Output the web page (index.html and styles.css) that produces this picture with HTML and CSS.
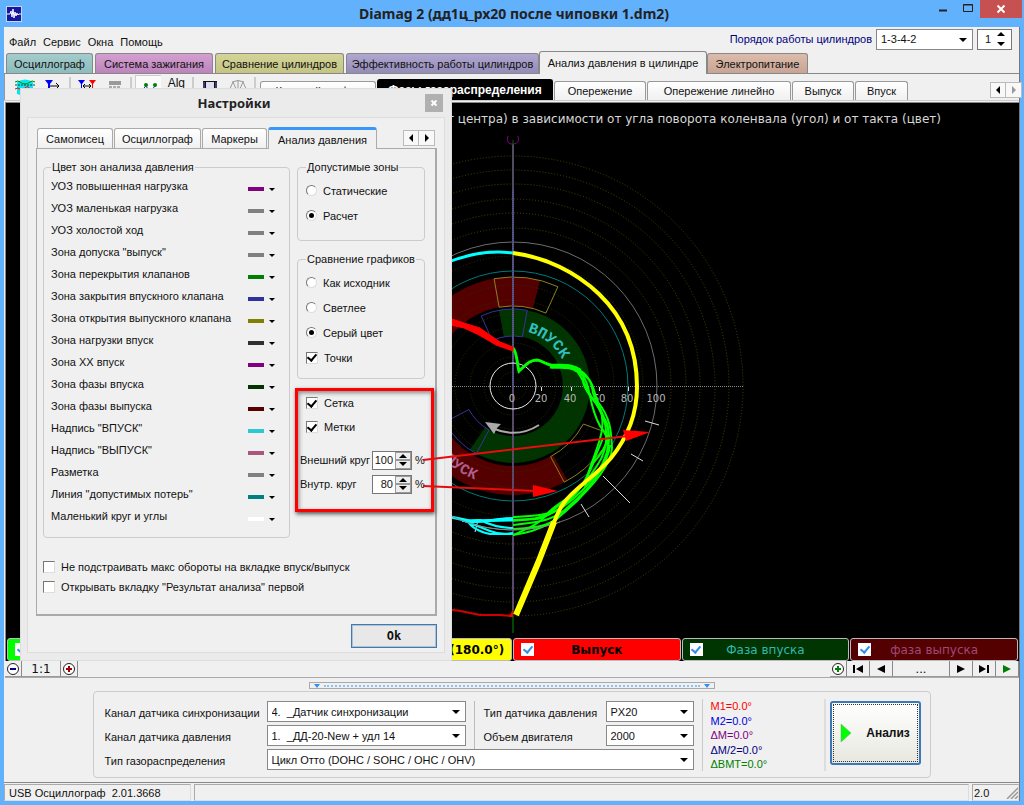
FILE: index.html
```html
<!DOCTYPE html>
<html lang="ru">
<head>
<meta charset="utf-8">
<title>Diamag 2</title>
<link rel="stylesheet" href="styles.css">
</head>
<body>
<div class="window">
  <header class="titlebar">
    <svg class="app-icon" width="16" height="16" viewBox="0 0 16 16"><rect width="16" height="16" fill="#c8d4f0"/><rect x="1" y="1" width="14" height="14" fill="#1418a0"/><path d="M1 8h3l1-3 1 6 1-8 1 9 1-6 1 4 1-3 1 2 1-1h2" fill="none" stroke="#fff"/></svg>
    <h1 class="title">Diamag 2 (дд1ц_px20 после чиповки 1.dm2)</h1>
    <div class="win-buttons">
      <button class="win-btn" aria-label="Свернуть"><svg width="10" height="12" viewBox="0 0 10 12"><path d="M1 8.500h8" stroke="#222" stroke-width="2"/></svg></button>
      <button class="win-btn" aria-label="Развернуть"><svg width="12" height="12" viewBox="0 0 12 12"><path d="M1.500 2.500h9v7h-9zM1 3h10" fill="none" stroke="#222"/></svg></button>
      <button class="win-btn win-close" aria-label="Закрыть"><svg width="10" height="10" viewBox="0 0 10 10"><path d="M1.500 1.500l7 7M8.500 1.500l-7 7" stroke="#fff" stroke-width="2"/></svg></button>
    </div>
  </header>

  <div class="client">
    <div class="menu-row">
      <nav class="menu">
        <button>Файл</button><button>Сервис</button><button>Окна</button><button>Помощь</button>
      </nav>
      <div class="order">
        <label for="order">Порядок работы цилиндров</label>
        <span class="combo combo-order"><select id="order"><option>1-3-4-2</option></select></span>
        <span class="spin spin-top"><input type="text" value="1" aria-label="Номер цилиндра"><span class="spin-arrows"><button class="up" aria-label="Больше"></button><button class="down" aria-label="Меньше"></button></span></span>
      </div>
    </div>

    <div class="main-tabs" role="tablist">
      <button role="tab" class="mtab teal">Осциллограф</button>
      <button role="tab" class="mtab pink">Система зажигания</button>
      <button role="tab" class="mtab olive">Сравнение цилиндров</button>
      <button role="tab" class="mtab violet">Эффективность работы цилиндров</button>
      <button role="tab" class="mtab current" aria-selected="true">Анализ давления в цилиндре</button>
      <button role="tab" class="mtab tan">Электропитание</button>
    </div>

    <div class="toolbar">
      <div class="tools">
        <button aria-label="Сигнал"><svg width="20" height="18" viewBox="0 0 20 18"><path d="M2 3q8-5 16 0v12q-8 3-16 0z" fill="#00e8f0"/><path d="M0 3q3-2 5 0 5 4 10 0 2-2 5 0" fill="none" stroke="#008000"/><path d="M0 6h20" stroke="#333" stroke-dasharray="2 1"/><path d="M0 10q3-2 5 0t5-1 5 1 5 0" fill="none" stroke="red"/></svg></button>
        <button aria-label="Маркер"><svg width="16" height="18" viewBox="0 0 16 18"><path d="M0 1h8L5 5v8H3V5z" fill="#00f"/><path d="M5 7h9M11 4l3 3-3 3" fill="none" stroke="#000"/></svg></button>
        <i class="sep"></i>
        <button aria-label="Маркеры"><svg width="18" height="18" viewBox="0 0 18 18"><path d="M0 1h7L4 5v9H3V5z" fill="#00f"/><path d="M11 1h7l-3 4v9h-1V5z" fill="red"/><path d="M5 7h8M7 5L5 7l2 2M11 5l2 2-2 2" fill="none" stroke="#000"/></svg></button>
        <button aria-label="Калькулятор"><svg width="16" height="18" viewBox="0 0 16 18"><path d="M2 2h12v4H2z" fill="#999"/><path d="M2 8h12M2 11h12M2 14h12" stroke="#aaa" stroke-width="2" stroke-dasharray="3 1"/></svg></button>
        <i class="sep"></i>
        <button class="pressed" aria-label="Точки"><svg width="18" height="18" viewBox="0 0 18 18"><path d="M1 11l5-5 4 6 5-6" fill="none" stroke="#22f"/><circle cx="6" cy="5" r="2" fill="#008000"/><circle cx="15" cy="5" r="2" fill="#008000"/></svg></button>
        <button class="alg">Alg</button>
        <i class="sep"></i>
        <button aria-label="Сохранить"><svg width="16" height="18" viewBox="0 0 16 18"><path d="M1 2h14v13H1z" fill="#111"/><path d="M4 3h8v6H4z" fill="#dde"/><path d="M2 3v7M14 3v7" stroke="#66d"/></svg></button>
        <button aria-label="Весы"><svg width="20" height="18" viewBox="0 0 20 18"><path d="M1 12L5 3l4 9zM11 12l4-9 4 9zM10 1v12M4 3q6-3 12 0" fill="none" stroke="#999"/></svg></button>
        <i class="sep"></i>
      </div>
      <div class="sub-tabs" role="tablist">
        <button role="tab" class="stab s1">Круговой график</button>
        <button role="tab" class="stab s2 current" aria-selected="true">Фазы газораспределения</button>
        <button role="tab" class="stab s3">Опережение</button>
        <button role="tab" class="stab s4">Опережение линейно</button>
        <button role="tab" class="stab s5">Выпуск</button>
        <button role="tab" class="stab s6">Впуск</button>
      </div>
      <div class="scroller"><button aria-label="Назад"><i class="tri-l"></i></button><button aria-label="Вперёд"><i class="tri-r dim"></i></button></div>
    </div>

    <main class="canvas">
      <p class="caption">Давление (расстояние от центра) в зависимости от угла поворота коленвала (угол) и от такта (цвет)</p>
      <svg class="plot" viewBox="6 130 1013 508" preserveAspectRatio="xMinYMin meet">
        <defs>
          <path id="arcIn" d="M513 330A56 56 0 0 1 569 386"/>
          <path id="arcOut" d="M412 386A101 101 0 0 0 513 487"/>
        </defs>
        <!-- phase zones -->
        <path fill="#540000" d="M540.100 280.400A109 109 0 1 0 567.500 480.400L553 455.300A80 80 0 1 1 532.900 308.500Z"/>
        <path fill="#003400" d="M499 310.300A77 77 0 1 1 469.900 449.800L485 427.500A50 50 0 1 0 503.900 336.800Z"/>
        <g fill="none" stroke="#303004" stroke-dasharray="1 2">
          <circle cx="513" cy="386" r="14"/><circle cx="513" cy="386" r="29"/><circle cx="513" cy="386" r="43"/><circle cx="513" cy="386" r="58"/><circle cx="513" cy="386" r="72"/><circle cx="513" cy="386" r="86"/><circle cx="513" cy="386" r="101"/><circle cx="513" cy="386" r="130"/>
        </g>
        <g fill="none" stroke="#46460a" stroke-dasharray="1 2">
          <circle cx="513" cy="386" r="158"/><circle cx="513" cy="386" r="173"/><circle cx="513" cy="386" r="187"/><circle cx="513" cy="386" r="202"/><circle cx="513" cy="386" r="216"/><circle cx="513" cy="386" r="230"/>
        </g>
        <circle cx="513" cy="386" r="115" fill="none" stroke="#007878"/>
        <circle cx="513" cy="386" r="144" fill="none" stroke="#6c6c6c"/>
        <!-- valve tolerance sectors -->
        <g fill="none" stroke="#8c8020">
          <path d="M494.100 278.700A109 109 0 0 1 557.900 286.700L545.900 313.100A80 80 0 0 0 499.100 307.200Z"/>
          <path d="M608 433L583.400 424A80 80 0 0 1 550.600 456.600L564.200 482.200A109 109 0 0 0 602 450"/>
        </g>
        <g fill="none" stroke="#34349c">
          <path d="M481.200 315.900A77 77 0 0 1 527.300 310.300L522.300 336.900A50 50 0 0 0 492.300 340.500Z"/>
          <path d="M468.900 409.500A50 50 0 0 0 489.100 429.900L476.300 453.700A77 77 0 0 1 445 422.100Z"/>
        </g>
        <!-- axes -->
        <path d="M450 386.500H744" stroke="#888" stroke-dasharray="1 1"/>
        <path d="M513 144V630" stroke="#504c60" stroke-width="2"/>
        <path d="M513 190V386" stroke="#5454a0" stroke-width="2" stroke-dasharray="1 1"/>
        <path d="M513 386V610" stroke="#704080" stroke-dasharray="2 2"/>
        <path d="M513 610V633" stroke="#004800" stroke-width="2"/>
        <path d="M508 136q-2 7 3 8h3q6-1 4-8" fill="none" stroke="#800080"/>
        <path d="M513 140v5" stroke="#006000"/>
        <circle cx="513" cy="386" r="23" fill="none" stroke="#eee"/>
        <path d="M541.500 387v4M571.500 387v4M599.500 387v4M628.500 387v4" stroke="#ddd"/>
        <g class="scale"><text x="512" y="402">0</text><text x="541" y="402">20</text><text x="570" y="402">40</text><text x="599" y="402">60</text><text x="627" y="402">80</text><text x="656" y="402">100</text></g>
        <path d="M539 425Q517 439 492 428" fill="none" stroke="#aaa" stroke-width="2"/>
        <path d="M485 422l16 2-4 4-3 6z" fill="#aaa"/>
        <text class="zone zone-in"><textPath href="#arcIn" startOffset="15">ВПУСК</textPath></text>
        <text class="zone zone-out"><textPath href="#arcOut" startOffset="119" text-anchor="end">ВЫПУСК</textPath></text>
        <path d="M645 421l14 4M631 454l12 7M603 476l27 27M581 504l8 13M478 520l-3 12" stroke="#ddd"/>
        <!-- pressure traces -->
        <g fill="none" stroke="#0f0" stroke-width="2">
          <path stroke-width="3" d="M513 348C517 352 517 364 519 371C525 366 529 360 537 360C544 361 547 366 556 366C568 365 576 368 582 373"/>
          <path stroke-width="5" d="M550 366C560 367 570 364 580 371"/>
          <path d="M574 368C590 373 592 386 593 393C597 405 608 420 609 435C611 460 590 487 563 507C550 516 530 516 513 517"/>
          <path d="M576 370C584 379 588 394 595 402C606 420 607 429 606 443C603 467 578 491 553 510C542 520 528 519 513 521"/>
          <path d="M578 371C593 383 586 400 600 426C618 446 602 478 570 505C553 523 533 522 513 525"/>
          <path d="M574 370C596 378 592 390 598 402C612 420 611 434 612 448C611 470 582 497 561 515C549 528 530 528 513 529"/>
          <path d="M584 376C579 385 594 401 600 408C608 430 595 450 587 477C579 495 556 503 547 514C539 525 524 530 513 535"/>
          <path d="M604 418C613 430 607 448 594 462C586 479 580 492 566 503C559 510 553 513 546 516C535 522 525 518 513 520"/>
          <path d="M603 438C595 459 587 472 585 488M610 445C608 465 588 489 577 501C562 514 550 530 513 535"/>
        </g>
        <g fill="none" stroke="#0ff" stroke-width="2">
          <path stroke-width="3" d="M446 263C468 254 490 250 513 253"/>
          <path stroke-width="3" d="M446 516L470 521L513 520"/>
          <path d="M470 522C485 523 495 518 513 518M462 520Q480 527 490 531T513 533M462 521L480 520Q496 528 513 528M468 521Q472 530 490 534H513"/>
        </g>
        <path d="M369 386A144 144 0 0 0 560 522" fill="none" stroke="#888"/>
        <path d="M446 317L464 323 480 328 500 342 513 347V351L496 345 479 335 464 328 446 324Z" fill="red" stroke="red"/>
        <path d="M446 609L460 611 480 615H500L513 616" fill="none" stroke="#d00000" stroke-width="2"/>
        <path d="M513 609l-4 8h4z" fill="red"/>
        <path d="M513 253C545 257 576 272 599 294C625 319 637 352 637 387C637 413 628 437 611 458C594 478 574 488 563 504C558 511 555 520 551 530" fill="none" stroke="#ff0" stroke-width="4"/>
        <path d="M554 522L538 563L516 615" fill="none" stroke="#ff0" stroke-width="6"/>
      </svg>
      <div class="legend">
        <label class="chip green"><input type="checkbox" checked><span>Сжатие</span></label>
        <label class="chip cyan"><input type="checkbox" checked><span>Сжатие (180.0°)</span></label>
        <label class="chip yellow"><input type="checkbox" checked><span>Рабочий такт (180.0°)</span></label>
        <label class="chip red"><input type="checkbox" checked><span>Выпуск</span></label>
        <label class="chip dgreen"><input type="checkbox" checked><span>Фаза впуска</span></label>
        <label class="chip dred"><input type="checkbox" checked><span>фаза выпуска</span></label>
      </div>
    </main>

    <div class="zoombar">
      <div class="zgroup">
        <button class="zb" aria-label="Уменьшить"><svg width="14" height="14" viewBox="0 0 14 14"><circle cx="7" cy="7" r="5.500" fill="#fff" stroke="#222"/><path d="M4 7h6" stroke="#00008b" stroke-width="2"/></svg></button>
        <button class="zb ratio">1:1</button>
        <button class="zb" aria-label="Увеличить"><svg width="14" height="14" viewBox="0 0 14 14"><circle cx="7" cy="7" r="5.500" fill="#fff" stroke="#222"/><path d="M4 7h6M7 4v6" stroke="#a00000" stroke-width="2"/></svg></button>
      </div>
      <div class="zgroup">
        <button class="zb" aria-label="Добавить"><svg width="14" height="14" viewBox="0 0 14 14"><circle cx="7" cy="7" r="5.500" fill="#fff" stroke="#222"/><path d="M4 7h6M7 4v6" stroke="#008000" stroke-width="2"/></svg></button>
        <button class="zb nav" aria-label="В начало"><svg width="12" height="10" viewBox="0 0 12 10"><path d="M1 1h2v8H1zM11 1v8L4 5z"/></svg></button>
        <button class="zb nav" aria-label="Назад"><svg width="12" height="10" viewBox="0 0 12 10"><path d="M10 1v8L2 5z"/></svg></button>
        <button class="zb dots">...</button>
        <button class="zb nav" aria-label="Вперёд"><svg width="12" height="10" viewBox="0 0 12 10"><path d="M2 1v8l8-4z"/></svg></button>
        <button class="zb nav" aria-label="В конец"><svg width="12" height="10" viewBox="0 0 12 10"><path d="M9 1h2v8H9zM1 1v8l7-4z"/></svg></button>
        <button class="zb nav" aria-label="Пуск"><svg width="12" height="10" viewBox="0 0 12 10"><path d="M2 1v8l8-4z" fill="#008000"/></svg></button>
      </div>
    </div>

    <section class="bottom">
      <div class="splitter"><i class="tri-d"></i><span class="dotline"></span><i class="tri-d"></i></div>
      <div class="params">
        <div class="fields">
          <label for="sync">Канал датчика синхронизации</label>
          <span class="combo"><select id="sync"><option>4.&nbsp; _Датчик синхронизации</option></select></span>
          <label class="second" for="sensor">Тип датчика давления</label>
          <span class="combo"><select id="sensor"><option>PX20</option></select></span>
          <label for="press">Канал датчика давления</label>
          <span class="combo"><select id="press"><option>1.&nbsp; _ДД-20-New + удл 14</option></select></span>
          <label class="second" for="volume">Объем двигателя</label>
          <span class="combo"><select id="volume"><option>2000</option></select></span>
          <label for="gas">Тип газораспределения</label>
          <span class="combo wide"><select id="gas"><option>Цикл Отто (DOHC / SOHC / OHC / OHV)</option></select></span>
          <i class="rule"></i>
        </div>
        <div class="readout">
          <span class="c-red">M1=0.0°</span><span class="c-blue">M2=0.0°</span><span class="c-purple">ΔM=0.0°</span><span class="c-navy">ΔM/2=0.0°</span><span class="c-green">ΔBMT=0.0°</span>
        </div>
        <div class="run">
          <button class="analyze"><svg width="12" height="20" viewBox="0 0 12 20"><path d="M1 1l10 9-10 9z" fill="#0f0" stroke="#6a6" stroke-width=".5"/></svg><span>Анализ</span></button>
        </div>
      </div>
    </section>

    <footer class="status">
      <span class="cell device">USB Осциллограф&nbsp; 2.01.3668</span>
      <span class="cell grow"></span>
      <span class="cell ver">2.0<svg width="12" height="12" viewBox="0 0 12 12"><path d="M1 12L12 1M5 12l7-7M9 12l3-3" stroke="#999" stroke-width="1.500"/></svg></span>
    </footer>
  </div>

  <section class="dialog" role="dialog" aria-labelledby="dlg">
    <header class="dlg-head"><h2 id="dlg">Настройки</h2><button class="dlg-close" aria-label="Закрыть"><svg width="8" height="8" viewBox="0 0 8 8"><path d="M1.500 1.500l5 5M6.500 1.500l-5 5" stroke="#fff" stroke-width="2"/></svg></button></header>
    <div class="dlg-body">
      <div class="dlg-tabs" role="tablist">
        <button role="tab" class="dtab d1">Самописец</button>
        <button role="tab" class="dtab d2">Осциллограф</button>
        <button role="tab" class="dtab d3">Маркеры</button>
        <button role="tab" class="dtab d4 current" aria-selected="true">Анализ давления</button>
        <div class="scroller"><button aria-label="Назад"><i class="tri-l"></i></button><button aria-label="Вперёд"><i class="tri-r"></i></button></div>
      </div>
      <div class="dlg-panel">
        <div class="cols">
          <fieldset class="colors">
            <legend>Цвет зон анализа давления</legend>
            <div class="crow"><span>УОЗ повышенная нагрузка</span><button class="pick purple" aria-label="Цвет"></button></div>
            <div class="crow"><span>УОЗ маленькая нагрузка</span><button class="pick gray" aria-label="Цвет"></button></div>
            <div class="crow"><span>УОЗ холостой ход</span><button class="pick gray" aria-label="Цвет"></button></div>
            <div class="crow"><span>Зона допуска "выпуск"</span><button class="pick gray" aria-label="Цвет"></button></div>
            <div class="crow"><span>Зона перекрытия клапанов</span><button class="pick pgreen" aria-label="Цвет"></button></div>
            <div class="crow"><span>Зона закрытия впускного клапана</span><button class="pick pblue" aria-label="Цвет"></button></div>
            <div class="crow"><span>Зона открытия выпускного клапана</span><button class="pick polive" aria-label="Цвет"></button></div>
            <div class="crow"><span>Зона нагрузки впуск</span><button class="pick pdark" aria-label="Цвет"></button></div>
            <div class="crow"><span>Зона ХХ впуск</span><button class="pick purple" aria-label="Цвет"></button></div>
            <div class="crow"><span>Зона фазы впуска</span><button class="pick pdgreen" aria-label="Цвет"></button></div>
            <div class="crow"><span>Зона фазы выпуска</span><button class="pick pdred" aria-label="Цвет"></button></div>
            <div class="crow"><span>Надпись "ВПУСК"</span><button class="pick pcyan" aria-label="Цвет"></button></div>
            <div class="crow"><span>Надпись "ВЫПУСК"</span><button class="pick ppink" aria-label="Цвет"></button></div>
            <div class="crow"><span>Разметка</span><button class="pick gray" aria-label="Цвет"></button></div>
            <div class="crow"><span>Линия "допустимых потерь"</span><button class="pick pteal" aria-label="Цвет"></button></div>
            <div class="crow"><span>Маленький круг и углы</span><button class="pick pwhite" aria-label="Цвет"></button></div>
          </fieldset>
          <div class="side">
            <fieldset class="zones">
              <legend>Допустимые зоны</legend>
              <label class="opt"><input type="radio" name="z">Статические</label>
              <label class="opt"><input type="radio" name="z" checked>Расчет</label>
            </fieldset>
            <fieldset class="compare">
              <legend>Сравнение графиков</legend>
              <label class="opt"><input type="radio" name="g">Как исходник</label>
              <label class="opt"><input type="radio" name="g">Светлее</label>
              <label class="opt"><input type="radio" name="g" checked>Серый цвет</label>
              <label class="opt"><input type="checkbox" checked>Точки</label>
            </fieldset>
            <div class="marked">
              <label class="opt"><input type="checkbox" checked>Сетка</label>
              <label class="opt"><input type="checkbox" checked>Метки</label>
              <div class="srow first"><label for="outer">Внешний круг</label><span class="spin"><input id="outer" type="text" value="100"><span class="spin-arrows"><button class="up" aria-label="Больше"></button><button class="down" aria-label="Меньше"></button></span></span>%</div>
              <div class="srow"><label for="inner">Внутр. круг</label><span class="spin"><input id="inner" type="text" value="80"><span class="spin-arrows"><button class="up" aria-label="Больше"></button><button class="down" aria-label="Меньше"></button></span></span>%</div>
            </div>
          </div>
        </div>
        <div class="extra">
          <label class="opt"><input type="checkbox">Не подстраивать макс обороты на вкладке впуск/выпуск</label>
          <label class="opt"><input type="checkbox">Открывать вкладку "Результат анализа" первой</label>
        </div>
      </div>
      <div class="dlg-foot"><button class="ok">Ok</button></div>
    </div>
  </section>

  <svg class="arrows" width="260" height="90" viewBox="410 420 260 90">
    <path d="M423 460L628 436M423 486L536 491" stroke="#e80c0c" stroke-width="2"/>
    <path d="M650 432L623 430L626 441ZM558 491L533 485V497Z" fill="#f00"/>
  </svg>
</div>
</body>
</html>
```
FILE: styles.css
```css
* { box-sizing: border-box; }
body, h1, h2, p { margin: 0; }
body, button, input, select { font-family: "Liberation Sans", Arial, sans-serif; font-size: 11px; color: #111; }
button { margin: 0; padding: 0; border: 0; background: none; display: inline-flex; align-items: center; justify-content: center; white-space: nowrap; }
svg { display: block; }

.window { position: relative; min-height: 100vh; display: flex; flex-direction: column; padding: 0 4px 4px; background: #62b1fd; }

.titlebar { height: 27px; display: flex; align-items: center; padding-left: 2px; }
.title { flex: 1; text-align: center; font: bold 14px "Noto Sans", sans-serif; color: #222; padding-left: 76px; }
.win-buttons { display: flex; align-items: flex-start; height: 27px; }
.win-btn { width: 25px; height: 16px; }
.win-close { width: 42px; height: 18px; margin-right: -2px; background: #c75050; }

.client { flex: 1; display: flex; flex-direction: column; background: #f0f0f0; border-right: 1px solid #777; }

.menu-row { display: flex; justify-content: space-between; height: 24px; }
.menu { display: flex; gap: 7px; padding: 6px 0 0 5px; }
.order { display: flex; align-items: center; gap: 4px; padding-right: 7px; }
.order label { color: #000080; }

.combo { position: relative; display: block; }
.combo select { appearance: none; display: block; width: 100%; height: 21px; border: 1px solid #888; border-radius: 0; background: #fff; padding: 0 18px 0 4px; }
.combo::after { content: ""; position: absolute; right: 6px; top: 9px; border: 4px solid transparent; border-top: 4px solid #000; border-bottom: 0; pointer-events: none; }
.combo-order { width: 97px; }

.spin { display: inline-flex; width: 40px; height: 19px; border: 1px solid #777; background: #fff; }
.spin input { flex: 1; min-width: 0; border: 0; padding: 0 2px 0 0; text-align: right; background: none; }
.spin-arrows { display: flex; flex-direction: column; width: 16px; }
.spin-arrows button { flex: 1; border: 1px solid #999; background: #eee; }
.up::after { content: ""; border: 4px solid transparent; border-bottom: 4px solid #000; border-top: 0; }
.down::after { content: ""; border: 4px solid transparent; border-top: 4px solid #000; border-bottom: 0; }
.spin-top { width: 35px; height: 21px; padding-right: 2px; }
.spin-top .spin-arrows button { border: 0; background: none; }

.main-tabs { display: flex; align-items: flex-end; height: 23px; padding-left: 2px; border-bottom: 1px solid #888; }
.mtab { height: 20px; border: 1px solid #888; border-bottom: 0; border-radius: 3px 3px 0 0; margin-right: 2px; }
.mtab.teal { width: 87px; background: linear-gradient(#a4cccc, #8cbcbc); }
.mtab.pink { width: 118px; background: linear-gradient(#d4a0d0, #bc84bc); }
.mtab.olive { width: 129px; background: linear-gradient(#d4d498, #c4c484); }
.mtab.violet { width: 193px; background: linear-gradient(#b0a8d0, #948cb8); margin-right: 0; }
.mtab.tan { width: 101px; background: linear-gradient(#dcbcac, #c8a494); }
.mtab.current { width: 168px; height: 23px; background: #f0f0f0; margin-right: 0; margin-bottom: -1px; }

.toolbar { display: flex; align-items: flex-end; height: 27px; border-bottom: 1px solid #ccc; }
.tools { display: flex; align-items: flex-start; width: 256px; height: 26px; padding: 1px 2px 0 6px; border-left: 1px solid #999; }
.tools button { width: 26px; height: 24px; padding-top: 4px; align-items: flex-start; margin: 0 1px; }
.tools .pressed { background: #fafafa; border: 1px solid #ccc; border-width: 1px 0 0 1px; }
.tools .alg { font-size: 12px; padding-top: 1px; }
.sep { width: 2px; height: 20px; margin: 2px 2px 0; background: #ccc; }
.sub-tabs { display: flex; align-items: flex-end; flex: 1; gap: 1px; }
.stab { height: 19px; border: 1px solid #999; border-bottom: 0; border-radius: 3px 3px 0 0; background: linear-gradient(#fff, #f0f0f0); }
.stab.current { height: 21px; background: #000; color: #fff; font-weight: bold; border-color: #000; font-size: 12px; }
.s1 { width: 116px; }
.s2 { width: 176px; }
.s3 { width: 92px; }
.s4 { width: 144px; }
.s5 { width: 62px; }
.s6 { width: 53px; }
.scroller { display: flex; padding-bottom: 2px; }
.scroller button { width: 16px; height: 16px; border: 1px solid #bbb; background: #f8f8f8; }
.scroller button + button { border-left: 0; }
.toolbar .scroller { margin-right: -3px; }
.tri-l, .tri-r { border: 4px solid transparent; }
.tri-l { border-right-color: #000; border-left: 0; }
.tri-r { border-left-color: #000; border-right: 0; }
.tri-r.dim { border-left-color: #999; }

.canvas { flex: 1; display: flex; flex-direction: column; margin: 1px 0 0 1px; border-top: 1px solid #888; border-left: 1px solid #888; background: #000; overflow: hidden; }
.caption { height: 27px; padding: 9px 78px 0 0; text-align: right; color: #d8d8d8; font: 12px "DejaVu Sans", sans-serif; white-space: nowrap; }
.plot { flex: 1; width: 100%; min-height: 0; }
.scale text { font: 10px "DejaVu Sans", sans-serif; fill: #b8b8b8; text-anchor: middle; }
.zone { font: bold 15px "Liberation Mono", monospace; }
.zone-in { fill: #30c0c0; }
.zone-out { fill: #b06090; }

.legend { display: grid; grid-template-columns: repeat(6, 1fr); gap: 1px; height: 23px; padding: 0 1px; }
.chip { display: grid; place-items: center; border: 1px solid #bbb; border-radius: 3px; font: bold 12px "DejaVu Sans", sans-serif; color: #000; white-space: nowrap; }
.chip > * { grid-area: 1 / 1; }
.green { background: #0f0; }
.cyan { background: #0ff; }
.yellow { background: #ff0; }
.red { background: #f00; }
.dgreen { background: #003400; color: #30b8b0; font-weight: normal; }
.dred { background: #540000; color: #a04878; font-weight: normal; }

input[type=checkbox], input[type=radio] { appearance: none; flex: none; width: 12px; height: 12px; margin: 0; background: #fff; border: 1px solid #777; border-color: #777 #ddd #ddd #777; display: grid; place-items: center; }
input[type=radio] { border-radius: 50%; width: 11px; height: 11px; }
input[type=radio]:checked::after { content: ""; width: 5px; height: 5px; border-radius: 50%; background: #000; }
input[type=checkbox]:checked::after { content: ""; width: 4px; height: 7px; margin-top: -2px; border: solid #000; border-width: 0 2px 2px 0; transform: rotate(40deg); }
.chip input[type=checkbox] { justify-self: start; margin-left: 7px; width: 13px; height: 13px; border: 0; }
.chip input[type=checkbox]:checked::after { border-color: #3090e8; }

.zoombar { display: flex; justify-content: space-between; height: 17px; border-bottom: 1px solid #aaa; margin-left: 1px; }
.zgroup { display: flex; }
.zb { width: 17px; border-right: 1px solid #888; border-bottom: 1px solid #999; }
.ratio { width: 39px; font: 12px "DejaVu Sans", sans-serif; }
.nav { width: 23px; }
.dots { width: 57px; border-left: 0; font-size: 13px; }

.bottom { flex: none; display: flex; flex-direction: column; align-items: center; height: 105px; padding-top: 4px; border-bottom: 1px solid #888; }
.splitter { display: flex; align-items: center; gap: 4px; width: 406px; height: 7px; padding: 0 4px; border: 1px solid #aaa; }
.tri-d { border: 3px solid transparent; border-top: 4px solid #3090f0; border-bottom: 0; }
.dotline { flex: 1; border-top: 2px dotted #8cc4f8; }
.params { display: flex; width: 838px; height: 87px; margin-top: 2px; border: 1px solid #ccc; border-radius: 4px; padding: 9px 9px 8px 11px; }
.fields { display: grid; grid-template-columns: 162px 199px 18px 122px 88px; grid-auto-rows: 24px; align-items: start; }
.fields label { padding-top: 6px; white-space: nowrap; }
.fields .second { grid-column: 4; }
.fields .combo { width: 100%; }
.fields .wide { grid-column: 2 / 6; }
.fields .rule { grid-area: 1 / 3 / 3 / 4; justify-self: center; align-self: stretch; width: 1px; background: #bbb; }
.readout { display: flex; flex-direction: column; justify-content: space-between; width: 124px; margin: -2px 0 -2px 8px; padding-left: 8px; border-left: 1px solid #ccc; border-right: 2px solid #ddd; line-height: 14px; }
.c-red { color: #f00; }
.c-blue { color: #00d; }
.c-purple { color: #800080; }
.c-navy { color: #000080; }
.c-green { color: #008000; }
.run { flex: 1; display: flex; justify-content: flex-end; }
.analyze { width: 91px; height: 64px; gap: 14px; border: 2px solid #3a78b8; border-radius: 3px; outline: 1px dotted #333; outline-offset: -4px; background: linear-gradient(#fff, #e8e8e0); font: bold 12px "Liberation Sans", sans-serif; }

.status { display: flex; gap: 3px; height: 18px; padding-top: 1px; }
.cell { display: flex; align-items: center; justify-content: space-between; padding-left: 4px; border: 1px solid #aaa; border-right-color: #ddd; border-bottom-color: #ddd; white-space: nowrap; }
.device { width: 187px; }
.grow { flex: 1; }
.ver { width: 47px; padding-left: 1px; }

.dialog { position: absolute; left: 20px; top: 88px; width: 432px; display: flex; flex-direction: column; padding: 0 6px 7px; background: #ebebeb; border: 1px solid #ddd; }
.dlg-head { display: flex; align-items: center; height: 28px; padding-right: 2px; }
.dlg-head h2 { flex: 1; text-align: center; font: bold 13px "Noto Sans", sans-serif; color: #222; padding-left: 16px; }
.dlg-close { width: 18px; height: 18px; background: #b0b0b0; }
.dlg-body { display: flex; flex-direction: column; padding: 8px 7px 4px 8px; border: 1px solid #ddd; background: #f0f0f0; }
.dlg-tabs { display: flex; align-items: flex-end; height: 22px; padding-left: 1px; }
.dtab { height: 20px; border: 1px solid #aaa; border-bottom: 0; border-radius: 3px 3px 0 0; background: linear-gradient(#fff, #f0f0f0); margin-right: 1px; }
.dtab.current { height: 22px; border-top: 3px solid #3898f8; background: #f0f0f0; margin: 0 0 -1px; z-index: 1; }
.d1 { width: 76px; }
.d2 { width: 87px; }
.d3 { width: 65px; }
.d4 { width: 109px; }
.dlg-tabs .scroller { margin-left: auto; padding: 0 2px 2px 0; }
.dlg-panel { display: flex; flex-direction: column; height: 468px; border: 1px solid #aaa; border-right-width: 2px; border-bottom-width: 2px; padding: 12px 2px 0 6px; }
.cols { display: flex; gap: 7px; }
fieldset { margin: 0; min-width: 0; border: 1px solid #ccc; border-radius: 4px; }
legend { padding: 0 1px; line-height: 12px; }
.colors { flex: none; width: 247px; height: 377px; padding: 2px 14px 0 7px; }
.crow { display: flex; align-items: center; justify-content: space-between; height: 22px; }
.pick { width: 27px; height: 5px; margin-top: 6px; justify-content: flex-end; background: linear-gradient(currentColor, currentColor) left / 16px 4px no-repeat; }
.pick::after { content: ""; border: 3px solid transparent; border-top: 3px solid #000; border-bottom: 0; }
.purple { color: #800080; } .gray { color: #808080; } .pgreen { color: #008000; } .pblue { color: #3030a0; }
.polive { color: #808000; } .pdark { color: #303030; } .pdgreen { color: #003400; } .pdred { color: #580000; }
.pcyan { color: #30c8d0; } .ppink { color: #a85880; } .pteal { color: #008080; } .pwhite { color: #fff; }
.side { flex: 1; display: flex; flex-direction: column; }
.opt { display: flex; align-items: center; gap: 6px; }
.side fieldset { width: 128px; padding: 5px 0 0 8px; }
.zones { height: 80px; }
.side fieldset .opt { height: 25px; }
.compare { height: 126px; margin-top: 12px; }
.marked { position: relative; width: 139px; height: 124px; margin: 9px 0 0 -2px; padding: 0 0 0 8px; border: 3px solid #f00; box-shadow: 1px 2px 4px #555, inset 1px 2px 4px #888; white-space: nowrap; }
.marked .opt { height: 24px; }
.srow { display: flex; align-items: center; gap: 3px; height: 24px; margin-left: -6px; }
.srow label { width: 69px; }
.first { margin-top: 9px; }
.extra { margin-top: 19px; }
.extra .opt { height: 20px; }
.dlg-foot { display: flex; justify-content: flex-end; padding-top: 8px; }
.ok { width: 86px; height: 24px; border: 1px solid #4878a8; outline: 1px solid #a8c4dc; outline-offset: -2px; background: #e8e8e8; font: bold 12px "DejaVu Sans Mono", monospace; }

.arrows { position: absolute; left: 410px; top: 420px; pointer-events: none; }
```
